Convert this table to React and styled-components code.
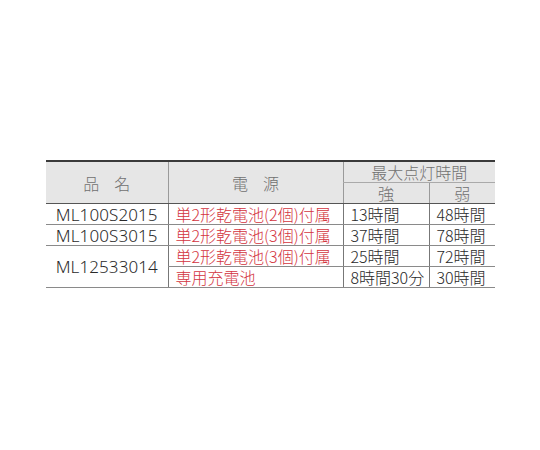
import React from "react";
import styled, { createGlobalStyle } from "styled-components";

const Global = createGlobalStyle`
  html, body { margin: 0; padding: 0; background: #fff; }
  body { font-family: "Noto Sans CJK JP", "Noto Sans", sans-serif; }
`;

const Page = styled.div`
  width: 540px;
  height: 450px;
  padding: 160px 0 0 46px;
  box-sizing: border-box;
`;

const Table = styled.table`
  width: 449px;
  border-collapse: collapse;
  table-layout: fixed;
  border-top: 2px solid #3a3a3a;
  border-bottom: 1px solid #8a8a8a;
  font-family: "Noto Sans CJK JP", sans-serif;
  font-weight: 300;
  font-size: 16px;
  color: #2a2a2a;
`;

const Head = styled.th`
  background: #e6e6e6;
  color: #707070;
  font-weight: 300;
  padding: 0 0 0 ${(p) => p.$ls || 0}px;
  height: ${(p) => p.$h || 20}px;
  line-height: 18px;
  text-align: center;
  letter-spacing: ${(p) => p.$ls || 0}px;
  border-left: ${(p) => (p.$first ? "none" : "1px solid #9a9a9a")};
  border-bottom: 1px solid ${(p) => p.$bottom || "#666"};
  font-size: 16px;
`;

const Cell = styled.td`
  padding: 0 0 0 ${(p) => (p.$center ? 0 : 7)}px;
  height: 20px;
  line-height: 18px;
  text-align: ${(p) => (p.$center ? "center" : "left")};
  color: ${(p) => (p.$red ? "#d3343e" : "#2a2a2a")};
  border-left: ${(p) => (p.$first ? "none" : "1px solid #777")};
  border-bottom: 1px solid #8a8a8a;
  white-space: nowrap;
  overflow: visible;
`;

const Model = styled.span`
  font-family: "Noto Sans", "Noto Sans CJK JP", sans-serif;
  font-weight: 300;
  font-size: 17px;
  letter-spacing: 0.1px;
`;

const rows = [
  { model: "ML100S2015", power: "単2形乾電池(2個)付属", hi: "13時間", lo: "48時間" },
  { model: "ML100S3015", power: "単2形乾電池(3個)付属", hi: "37時間", lo: "78時間" },
];

export default function App() {
  return (
    <>
      <Global />
      <Page>
        <Table>
          <colgroup>
            <col style={{ width: "122px" }} />
            <col style={{ width: "175px" }} />
            <col style={{ width: "86px" }} />
            <col style={{ width: "66px" }} />
          </colgroup>
          <thead>
            <tr>
              <Head $first rowSpan={2} $ls={15} $bottom="#555">品名</Head>
              <Head rowSpan={2} $ls={15} $bottom="#555">電源</Head>
              <Head colSpan={2} $h={20} $bottom="#aaa">最大点灯時間</Head>
            </tr>
            <tr>
              <Head $h={20} $bottom="#555">強</Head>
              <Head $h={20} $bottom="#555">弱</Head>
            </tr>
          </thead>
          <tbody>
            {rows.map((r) => (
              <tr key={r.model}>
                <Cell $first $center><Model>{r.model}</Model></Cell>
                <Cell $red>{r.power}</Cell>
                <Cell>{r.hi}</Cell>
                <Cell>{r.lo}</Cell>
              </tr>
            ))}
            <tr>
              <Cell $first $center rowSpan={2}><Model>ML12533014</Model></Cell>
              <Cell $red>単2形乾電池(3個)付属</Cell>
              <Cell>25時間</Cell>
              <Cell>72時間</Cell>
            </tr>
            <tr>
              <Cell $red>専用充電池</Cell>
              <Cell>8時間30分</Cell>
              <Cell>30時間</Cell>
            </tr>
          </tbody>
        </Table>
      </Page>
    </>
  );
}
